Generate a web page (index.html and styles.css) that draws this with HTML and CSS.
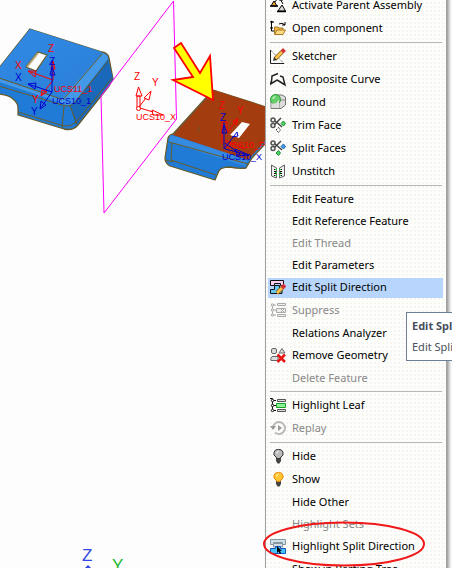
FILE: index.html
```html
<!DOCTYPE html>
<html lang="en">
<head>
<meta charset="utf-8">
<title>Part editor</title>
<link rel="stylesheet" href="styles.css">
</head>
<body>
<main class="workspace">
  <svg class="scene" width="265" height="568" viewBox="0 0 265 568" role="img" aria-label="3D view of mirrored parts">
    <defs>
      <linearGradient id="bend" x1="0" y1="0" x2="1" y2="1"><stop offset="0" stop-color="#328ae4"/><stop offset="1" stop-color="#2a7fd8"/></linearGradient>
    </defs>
    <g stroke="#665c2a" stroke-width="1.3" stroke-linejoin="round">
      <path fill="#207bd7" d="M-1 68 30 29 102 52Q108 53 109 58L113 79 109 86 78 125Q73 131 64 129L18 115V108Q18 103 13 99 9 95-1 94Z"/>
      <path fill="#1968ba" stroke="none" d="M107 55 113 79 76 126 70 106 101 66Z"/>
      <path fill="url(#bend)" stroke="none" d="M-1 68 30 29 102 52 63 99-1 77Z"/>
      <path fill="#4398e8" stroke="none" d="M102 53Q108 54 108 59L74 103Q68 107 62 103L-1 82V78L62 99Z"/>
      <path fill="none" stroke-width="1" d="M-1 78 61 99Q64 100 67 95L102 54M-1 86 62 105Q70 108 75 102L108 61M64 106 62 128M70 106 77 124M18 112 64 126Q71 127 76 122L112 78"/>
      <path fill="#fdfdfd" d="M38 52 47 55 36 71 26 67Z"/>
      <path fill="none" stroke="#b8a878" stroke-width="2" d="M38 53 27 67"/>
    </g>
    <path fill="none" stroke="#f0f" d="M173.500 1 176.500 119 104 213 101 96Z"/>
    <g stroke="#665c2a" stroke-width="1.3" stroke-linejoin="round">
      <path fill="#207bd7" d="M213 90 266 107V143L252 158 246 168Q239 169 230 167 219 167 218 173L215 180 170 166Q165 163 165 158L168 138Q169 135 173 134Z"/>
      <path fill="#348be0" stroke="none" d="M170 135 248 159 245 166 169 142Z"/>
      <path fill="#a33d10" stroke="none" d="M214 90 266 107V140L248 160 173 135Z"/>
      <path fill="none" stroke-width="1" d="M169 142 248 164M172 143 171 160 216 175M166 160 173 162M198 132 200 127"/>
      <path fill="#fdfdfd" stroke="none" d="M242 122 250 124 239 138 230 135Z"/>
    </g>
    <path fill="#ff0" stroke="#f00" stroke-width="1.800" d="M174 48 181 43 200 73 210 56 213 100 173 80 193 77Z"/>
    <g class="axis-red">
      <path d="M53 80V62M51 69 53 61 55 69ZM53 80 28 71M36 71 28 71 35 77ZM53 80 41 96M42 90 41 96 47 92Z"/>
      <text x="48" y="52">Z</text><text x="15" y="69">X</text><text x="32" y="103">Y</text><text class="label" x="54" y="92">UCS11_1</text>
      <path d="M137 107V96H140V107M136 96 138.500 87 142 96ZM139 107 146 98M144 98 151 91 149 100ZM140 108 153 112M152 110 163 115 153 115Z"/>
      <circle cx="138.500" cy="108.500" r="2"/>
      <text x="134" y="80">Z</text><text x="152" y="86">Y</text><text class="label" x="136" y="120">UCS10_X</text>
      <path d="M222 144V122H227V133L237 120M233 121 238 119 236 125ZM225 140 245 149"/>
      <text x="219" y="109">Z</text><text x="237" y="114">Y</text><text class="label" x="225" y="148">UCS10_P</text>
    </g>
    <g class="axis-blue">
      <path d="M52 92V60M50 75 52 67 55 75ZM52 92 28 84M36 83 28 84 35 89ZM52 92 40 109M41 101 40 109 46 105Z"/>
      <text x="49" y="65">Z</text><text x="15" y="81">X</text><text x="31" y="115">Y</text><text class="label" x="52" y="104">UCS10_1</text>
      <path d="M224 149V122M222 133 224 125 227 133ZM224 149 237 132 238 136 232 137M225 149 249 155M235 149 249 155 237 156ZM225 143 240 154"/>
      <text x="220" y="121">Z</text><text class="label" x="222" y="160">UCS10_X</text>
    </g>
    <text class="triad-z" x="82" y="561">Z</text><text class="triad-y" x="112" y="571">Y</text>
    <path fill="#3048e0" d="M88 565 91 568H85Z"/>
  </svg>

  <div class="menu" role="menu">
    <button class="item has-icon" role="menuitem"><svg viewBox="0 0 16 16"><path fill="none" stroke="#000" d="M4 6 9 0M9 0 13 7M9 3H13"/><path fill="#f4ad32" stroke="#000" d="M4 4 7 9H1Z"/><path fill="#ddd" stroke="#000" d="M12 8 15.500 14H8Z"/><path stroke="#000" stroke-width="1.500" d="M0 9H8M7 14.500H16"/></svg>Activate Parent Assembly</button>
    <button class="item has-icon" role="menuitem"><svg viewBox="0 0 16 16"><path fill="none" stroke="#000" d="M1.500 1V11H5M1 2H4M9 4Q12 2 15 5M12 5H15V2"/><circle cx="1.500" cy="2" r="1.200"/><circle cx="1.500" cy="8" r="1.200"/><path fill="#f2b843" stroke="#a87925" d="M4.500 14V7H8L9 8H13V10"/><path fill="#ffdc82" stroke="#a87925" d="M4.500 14.500 7 10H15.500L13 14.500Z"/></svg>Open component</button>
    <hr>
    <button class="item has-icon" role="menuitem"><svg viewBox="0 0 16 16"><path fill="none" stroke="#555" stroke-dasharray="1 1" d="M.5 2 14 15.500"/><path fill="none" stroke="#222" d="M.5 2V15.500H14"/><path stroke="#8a5c13" stroke-width="4" d="M5 11 12 4"/><path stroke="#ffc34b" stroke-width="2.500" d="M5 11 12 4"/><path stroke="#d03236" stroke-width="4" d="M12 4 14.500 1.500"/><path fill="#333" d="M3 13 4 9 7 12Z"/></svg>Sketcher</button>
    <button class="item has-icon" role="menuitem"><svg viewBox="0 0 16 16"><path fill="none" stroke="#222" stroke-width="1.500" d="M8 2.500 2 5Q2 10 .5 13L7 9Q9 10 15 14L13 6 10 5"/></svg>Composite Curve</button>
    <button class="item has-icon" role="menuitem"><svg viewBox="0 0 16 16"><path fill="#ddd" stroke="#777" d="M1 7V14.500H11L15.500 11V3L12 1H5Z"/><path fill="none" stroke="#888" d="M8 6H15M9 8V14"/><circle cx="5.500" cy="5.500" r="5" fill="#64cf69" stroke="#329a3b"/><path fill="#b7efb2" d="M2 5Q3 2 6 2L4 5Z"/><path fill="#ddd" d="M1.500 9Q6 11 8.500 6H9V14H1.500Z"/></svg>Round</button>
    <button class="item has-icon" role="menuitem"><svg viewBox="0 0 16 16"><path stroke="#444" stroke-width="1.500" d="M4 3 12 10M4 8 11 1"/><g fill="#eee" stroke="#555" stroke-width="1.500"><circle cx="3" cy="3" r="2"/><circle cx="3" cy="8.500" r="2"/></g><path fill="#43d85a" stroke="#268a39" d="M13.500 4 15.500 6.500 13.500 9 11 6.500Z"/><path fill="#fff" stroke="#222" stroke-dasharray="1.500 1" d="M8.500 10.500 10.500 13 8.500 15.500 6 13Z"/></svg>Trim Face</button>
    <button class="item has-icon" role="menuitem"><svg viewBox="0 0 16 16"><path stroke="#444" stroke-width="1.500" d="M4 3 12 10M4 8 11 1"/><g fill="#eee" stroke="#555" stroke-width="1.500"><circle cx="3" cy="3" r="2"/><circle cx="3" cy="8.500" r="2"/></g><path fill="#3e9def" stroke="#23649d" d="M13.500 4 15.500 6.500 13.500 9 11 6.500Z"/><path fill="#43d85a" stroke="#268a39" d="M8.500 10.500 10.500 13 8.500 15.500 6 13Z"/></svg>Split Faces</button>
    <button class="item has-icon" role="menuitem"><svg viewBox="0 0 16 16"><path fill="#eee" stroke="#655b67" d="M1.500 2 6.500 5V15L1.500 13ZM14.500 2 9.500 5V15L14.500 13Z"/><path stroke="#111" stroke-width="2" stroke-dasharray="1 1" d="M5 6V14M11 6V14"/><path stroke="#2bd34c" stroke-width="2" stroke-dasharray="1 2" d="M6 6V14M10 6V14"/></svg>Unstitch</button>
    <hr>
    <button class="item" role="menuitem">Edit Feature</button>
    <button class="item" role="menuitem">Edit Reference Feature</button>
    <button class="item" role="menuitem" disabled>Edit Thread</button>
    <button class="item" role="menuitem">Edit Parameters</button>
    <button class="item has-icon selected" role="menuitem"><svg viewBox="0 0 16 16"><path fill="#ffd0f1" stroke="#111" d="M.5 1.500H13.500V6.500H10.500V4.500H4.500V6.500H.5Z"/><path fill="#64c9f4" stroke="#111" d="M4.500 6.500H9.500V10.500H12V14.500H.5V10.500H4.500Z"/><path stroke="#875917" stroke-width="4" d="M7 14 12 9"/><path stroke="#ffc34b" stroke-width="2.500" d="M7 14 12 9"/><path stroke="#d03236" stroke-width="4" d="M12 9 15 6"/></svg>Edit Split Direction</button>
    <button class="item has-icon" role="menuitem" disabled><svg viewBox="0 0 16 16"><g fill="#eee" stroke="#aaa"><path fill="none" d="M2.500 2V14M2 3H6M2 8H6M2 13H6"/><path d="M7.500 1.500H15.500V3.500H7.500ZM6.500 6.500H15.500V10.500H6.500ZM7.500 12.500H15.500V14.500H7.500Z"/><circle cx="2.500" cy="3" r="1.200"/><circle cx="2.500" cy="8" r="1.200"/><circle cx="2.500" cy="13" r="1.200"/><path d="M11 7 14 10M14 7 11 10"/></g></svg>Suppress</button>
    <button class="item" role="menuitem">Relations Analyzer</button>
    <button class="item has-icon" role="menuitem"><svg viewBox="0 0 16 16"><g fill="#ddd" stroke="#666"><rect x="1.500" y="1.500" width="5" height="5" rx="1.500"/><path d="M9 6 12 1.500 15 6ZM2 9.500H8V13.500H1Q0 11 2 9.500Z"/></g><path stroke="#e81515" stroke-width="2.500" d="M7.500 7.500 15 15M15 7.500 7.500 15"/></svg>Remove Geometry</button>
    <button class="item" role="menuitem" disabled>Delete Feature</button>
    <hr>
    <button class="item has-icon" role="menuitem"><svg viewBox="0 0 16 16"><path fill="none" stroke="#111" d="M0 1.500H2.500V14M2 3.500H6M2 8.500H6M2 13.500H6"/><g fill="#fff" stroke="#111"><circle cx="2.500" cy="3.500" r="1.200"/><circle cx="2.500" cy="8.500" r="1.200"/><circle cx="2.500" cy="13.500" r="1.200"/></g><path fill="#ddd" stroke="#555" d="M7.500 2.500H15.500V4.500H7.500ZM7.500 12.500H15.500V14.500H7.500Z"/><path fill="#8ff09a" stroke="#15a524" d="M6.500 6.500H15.500V10.500H6.500Z"/></svg>Highlight Leaf</button>
    <button class="item has-icon" role="menuitem" disabled><svg viewBox="0 0 16 16"><path fill="none" stroke="#bbb" stroke-width="2" d="M3 8A6 6 0 1 1 5 12.500"/><path fill="#999" d="M0 6H6L3 10ZM8 5 12 8 8 11Z"/></svg>Replay</button>
    <hr>
    <button class="item has-icon" role="menuitem"><svg viewBox="0 0 16 16"><path fill="#444" d="M6 9H11V13L9.500 15.500H7.500L6 13Z"/><path fill="#bbb" stroke="#333" d="M8.500 1.500A4 4 0 0 1 11 9L10 10.500H7L6 9A4 4 0 0 1 8.500 1.500Z"/><path fill="#eee" d="M6 5 8 2.500 9 3 7 6Z"/></svg>Hide</button>
    <button class="item has-icon" role="menuitem"><svg viewBox="0 0 16 16"><path fill="#444" d="M6 9H11V13L9.500 15.500H7.500L6 13Z"/><path fill="#ffc52e" stroke="#f28b0c" d="M8.500 1.500A4 4 0 0 1 11 9L10 10.500H7L6 9A4 4 0 0 1 8.500 1.500Z"/><path fill="#fff0a2" d="M6 5 8 2.500 9 3 7 6Z"/></svg>Show</button>
    <button class="item" role="menuitem">Hide Other</button>
    <button class="item" role="menuitem" disabled>Highlight Sets</button>
    <button class="item has-icon" role="menuitem"><svg viewBox="0 0 16 16"><path fill="#cfe1e8" stroke="#87979e" d="M.5 1.500H15.500V6.500H12.500V4.500H3.500V6.500H.5Z"/><path fill="#d4dee2" stroke="#87979e" d="M3.500 5.500H12.500V9H3.500Z"/><path fill="#44c4ff" stroke="#1753bd" d="M5.500 8.500H10.500V10.500H15.500V15.500H.5V10.500H5.500Z"/><path fill="#000" d="M7 8V15L8.500 13.500 10 16 11 15 10 13H12Z"/></svg>Highlight Split Direction</button>
    <button class="item" role="menuitem">Show in Parting Tree</button>
  </div>

  <div class="tooltip" role="tooltip"><strong>Edit Split Direction</strong><span>Edit Split Direction</span></div>
  <svg class="callout" width="164" height="48" viewBox="0 0 164 48" aria-hidden="true"><ellipse cx="82" cy="24" rx="80" ry="21.500"/></svg>
</main>
</body>
</html>
```
FILE: styles.css
```css
* {
  box-sizing: border-box;
}

body {
  margin: 0;
  background: #fdfdfd;
  color: #000;
  font: 11px/16px "Noto Sans", "Open Sans", sans-serif;
}

.workspace {
  position: relative;
  display: flex;
  align-items: flex-start;
  height: 100vh;
  padding-right: 5px;
  overflow: hidden;
}

.scene {
  flex: 1 1 0;
  min-width: 0;
}

.scene text {
  font: 10px "Liberation Sans", sans-serif;
  stroke: none;
}

.scene .label {
  font-size: 9px;
}

.axis-red,
.axis-blue {
  fill: none;
  stroke: #f00;
}

.axis-red text {
  fill: #f00;
}

.axis-blue {
  stroke: #00c;
}

.axis-blue text {
  fill: #00c;
}

.scene .triad-z,
.scene .triad-y {
  font-size: 17px;
  fill: #3048e0;
}

.scene .triad-y {
  fill: #20b830;
}

.menu {
  flex: none;
  width: 182px;
  margin-top: -6px;
  padding: 0 3px 0 2px;
  border: solid #a0a0a0;
  border-width: 0 1px;
  background: radial-gradient(circle at 1px 1px, #f6f6f0 1px, transparent 1px) 0 0 / 4px 4px #fdfdfc;
  box-shadow: 2px 0 3px #999;
}

.item {
  display: flex;
  align-items: center;
  width: 100%;
  height: 22px;
  padding: 0 0 0 24px;
  border: 0;
  background: none;
  color: inherit;
  font: inherit;
  text-align: left;
  white-space: nowrap;
}

.item:disabled {
  color: #888;
}

.has-icon {
  gap: 6px;
  height: 23px;
  padding: 0 0 1px 2px;
}

.item svg {
  flex: none;
  width: 16px;
  height: 16px;
}

.selected {
  background: linear-gradient(#b8d6fd, #b8d6fd) 0 2px / 100% 20px no-repeat;
}

.menu hr {
  height: 1px;
  margin: 2px 1px 2px 2px;
  border: 0;
  background: #b8b8b8;
}

.tooltip {
  position: absolute;
  top: 312px;
  left: 406px;
  display: flex;
  flex-direction: column;
  gap: 5px;
  padding: 5px;
  border: 1px solid #6c7f96;
  background: #fff;
  color: #484f5c;
  white-space: nowrap;
}

.callout {
  position: absolute;
  top: 520px;
  left: 262px;
}

.callout ellipse {
  fill: none;
  stroke: #f01818;
  stroke-width: 2;
}
```
